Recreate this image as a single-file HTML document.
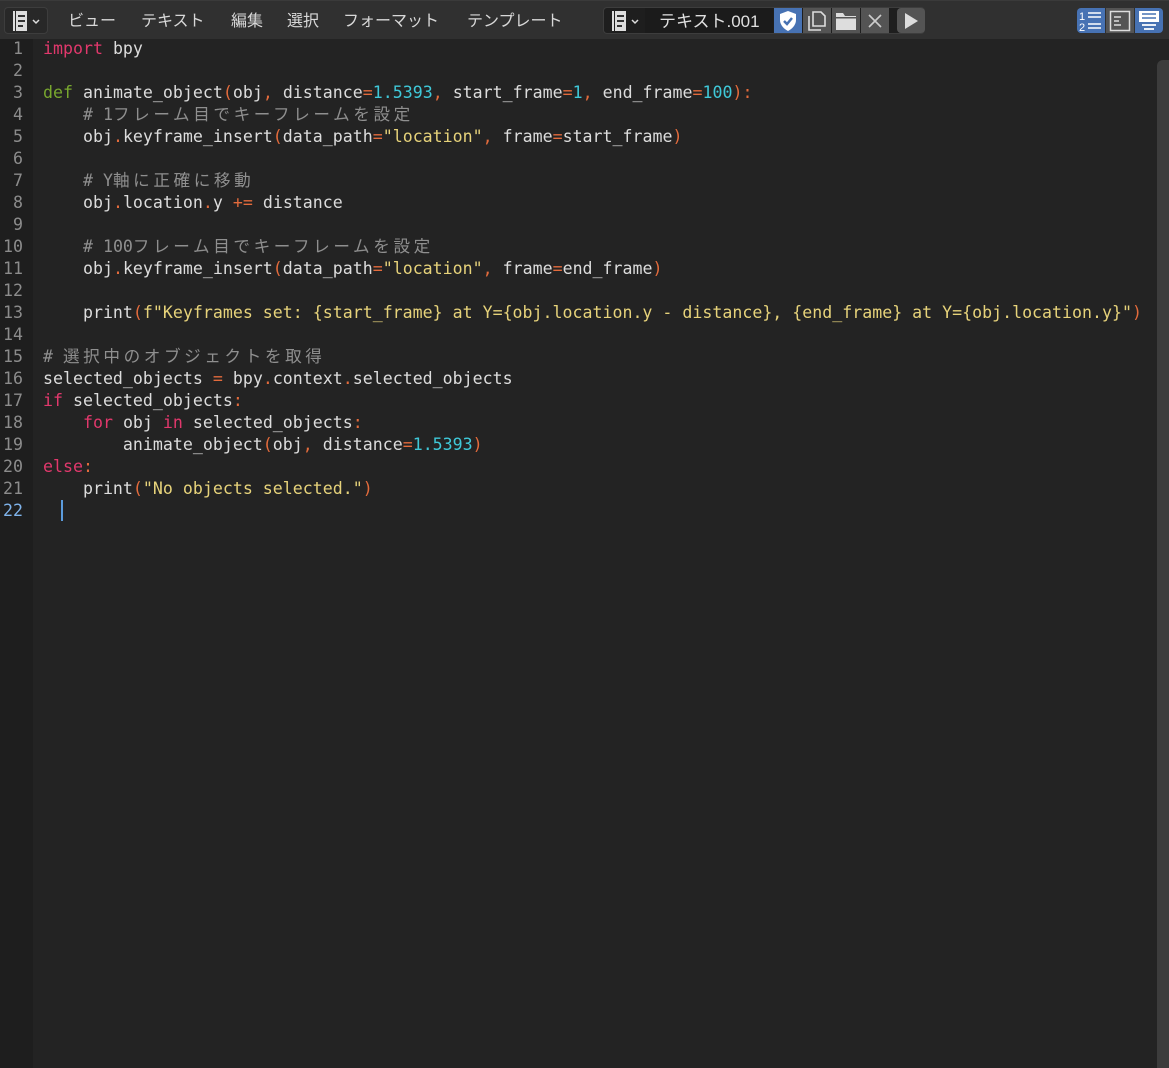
<!DOCTYPE html>
<html><head><meta charset="utf-8"><style>
body{margin:0;width:1169px;height:1068px;background:#232323;overflow:hidden;position:relative;font-family:"DejaVu Sans Mono","Noto Sans CJK JP",monospace}
#hdr{position:absolute;left:0;top:0;width:1169px;height:39px;background:#303030;border-top:1px solid #3a3a3a;box-sizing:border-box}
.menu{position:absolute;top:6px;font-family:"Liberation Sans","Noto Sans CJK JP",sans-serif;font-size:16px;color:#d8d8d8}
.btn{position:absolute;top:6px;height:27px;background:#282828;border-radius:4px}
#gut{position:absolute;left:0;top:39px;width:33px;height:1029px;background:#1e1e1e}
#code{position:absolute;left:0;top:38px;font-size:16.6px;color:#dcdcdc;white-space:pre}
#code div{height:22px;line-height:22px;overflow:visible}
.ln{display:inline-block;width:23px;text-align:right;color:#8c8c8c;margin-right:20px}
.k{color:#e1386c}.d{color:#78a72e}.n{color:#3fc8d8}.s{color:#e6d27a}.o{color:#e36b3c}.c{color:#8f8f8f}
.j{letter-spacing:3.6px;font-family:"Noto Sans CJK JP",sans-serif;line-height:1}
</style></head><body>
<div id="hdr">
 <div class="btn" style="left:4px;width:44px;background:#282828;border:1px solid #3d3d3d;box-sizing:border-box"></div>
 <svg style="position:absolute;left:11px;top:10px" width="34" height="20"><rect x="2" y="0" width="2" height="20" fill="#ddd"/><rect x="5" y="0" width="11" height="20" fill="#ddd"/><rect x="7" y="4" width="7" height="2" fill="#333"/><rect x="7" y="9" width="7" height="2" fill="#333"/><rect x="7" y="14" width="5" height="2" fill="#333"/><path d="M22 9l3 3 3-3" stroke="#ddd" fill="none" stroke-width="1.5"/></svg>
 <span class="menu" style="left:68px">ビュー</span>
 <span class="menu" style="left:141px">テキスト</span>
 <span class="menu" style="left:231px">編集</span>
 <span class="menu" style="left:287px">選択</span>
 <span class="menu" style="left:343px">フォーマット</span>
 <span class="menu" style="left:467px">テンプレート</span>
 <div class="btn" style="left:603px;width:322px;background:#1e1e1e;border:1px solid #3d3d3d;box-sizing:border-box"></div>
 <svg style="position:absolute;left:610px;top:10px" width="34" height="20"><rect x="2" y="0" width="2" height="20" fill="#ddd"/><rect x="5" y="0" width="11" height="20" fill="#ddd"/><rect x="7" y="4" width="7" height="2" fill="#333"/><rect x="7" y="9" width="7" height="2" fill="#333"/><rect x="7" y="14" width="5" height="2" fill="#333"/><path d="M22 9l3 3 3-3" stroke="#ddd" fill="none" stroke-width="1.5"/></svg>
 <div style="position:absolute;left:645px;top:7px;width:128px;height:25px;background:#1b1b1b"></div>
 <span class="menu" style="left:659px;color:#e0e0e0;font-size:17px">テキスト.001</span>
 <div style="position:absolute;left:774px;top:7px;width:28px;height:25px;background:#4772b3"></div>
 <svg style="position:absolute;left:778px;top:9px" width="20" height="22"><path d="M10 1L2 4v6c0 5 4 9 8 11 4-2 8-6 8-11V4z" fill="#fff"/><path d="M6 11l3 3 5-6" stroke="#4772b3" stroke-width="2.5" fill="none"/></svg>
 <div style="position:absolute;left:803px;top:7px;width:28px;height:25px;background:#545454"></div>
 <svg style="position:absolute;left:806px;top:9px" width="22" height="22"><path d="M3 6v14h12M7 2h8l4 4v10H7z" stroke="#ddd" stroke-width="1.6" fill="none"/></svg>
 <div style="position:absolute;left:832px;top:7px;width:28px;height:25px;background:#545454"></div>
 <svg style="position:absolute;left:835px;top:10px" width="22" height="20"><path d="M1 2h7l2 3h11v14H1z" fill="#ddd"/><rect x="1" y="6" width="20" height="1.5" fill="#545454"/></svg>
 <div style="position:absolute;left:861px;top:7px;width:28px;height:25px;background:#545454"></div>
 <svg style="position:absolute;left:868px;top:13px" width="14" height="14"><path d="M1 1l12 12M13 1L1 13" stroke="#ccc" stroke-width="1.6"/></svg>
 <div style="position:absolute;left:897px;top:7px;width:28px;height:25px;background:#545454;border-radius:4px"></div>
 <svg style="position:absolute;left:903px;top:11px" width="16" height="18"><path d="M2 1l13 8L2 17z" fill="#ddd"/></svg>
 <div style="position:absolute;left:1077px;top:7px;width:28px;height:25px;background:#4772b3;border-radius:4px 0 0 4px"></div>
 <svg style="position:absolute;left:1079px;top:9px" width="24" height="22"><text x="0" y="10" font-size="11" fill="#fff" font-family="Liberation Sans">1</text><text x="0" y="21" font-size="11" fill="#fff" font-family="Liberation Sans">2</text><path d="M9 3h13M9 7h13M9 14h13M9 18h13" stroke="#fff" stroke-width="1.6"/></svg>
 <div style="position:absolute;left:1106px;top:7px;width:28px;height:25px;background:#545454"></div>
 <svg style="position:absolute;left:1109px;top:9px" width="22" height="22"><rect x="1.5" y="1.5" width="19" height="19" stroke="#ddd" stroke-width="1.5" fill="none"/><path d="M5 7h7M5 11h5M5 15h7" stroke="#ddd" stroke-width="1.5"/></svg>
 <div style="position:absolute;left:1135px;top:7px;width:28px;height:25px;background:#4772b3;border-radius:0 4px 4px 0"></div>
 <svg style="position:absolute;left:1138px;top:9px" width="22" height="22"><rect x="1" y="1" width="20" height="11" fill="#fff"/><path d="M4 4h14M4 8h14" stroke="#4772b3" stroke-width="1.5"/><path d="M4 15h14M6 19h10" stroke="#fff" stroke-width="1.8"/></svg>
</div>
<div id="gut"></div>
<div style="position:absolute;left:1157px;top:60px;width:12px;height:1008px;background:#3c3c3c;border-radius:6px 0 0 0"></div>
<div id="code"><div><span class="ln">1</span><span class="k">import</span> bpy</div><div><span class="ln">2</span></div><div><span class="ln">3</span><span class="d">def</span> animate_object<span class="o">(</span>obj<span class="o">,</span> distance<span class="o">=</span><span class="n">1.5393</span><span class="o">,</span> start_frame<span class="o">=</span><span class="n">1</span><span class="o">,</span> end_frame<span class="o">=</span><span class="n">100</span><span class="o">):</span></div><div><span class="ln">4</span>    <span class="c"># 1<span class="j">フレーム目でキーフレームを設定</span></span></div><div><span class="ln">5</span>    obj<span class="o">.</span>keyframe_insert<span class="o">(</span>data_path<span class="o">=</span><span class="s">"location"</span><span class="o">,</span> frame<span class="o">=</span>start_frame<span class="o">)</span></div><div><span class="ln">6</span></div><div><span class="ln">7</span>    <span class="c"># Y<span class="j">軸に正確に移動</span></span></div><div><span class="ln">8</span>    obj<span class="o">.</span>location<span class="o">.</span>y <span class="o">+=</span> distance</div><div><span class="ln">9</span></div><div><span class="ln">10</span>    <span class="c"># 100<span class="j">フレーム目でキーフレームを設定</span></span></div><div><span class="ln">11</span>    obj<span class="o">.</span>keyframe_insert<span class="o">(</span>data_path<span class="o">=</span><span class="s">"location"</span><span class="o">,</span> frame<span class="o">=</span>end_frame<span class="o">)</span></div><div><span class="ln">12</span></div><div><span class="ln">13</span>    print<span class="o">(</span><span class="s">f"Keyframes set: {start_frame} at Y={obj.location.y - distance}, {end_frame} at Y={obj.location.y}"</span><span class="o">)</span></div><div><span class="ln">14</span></div><div><span class="ln">15</span><span class="c"># <span class="j">選択中のオブジェクトを取得</span></span></div><div><span class="ln">16</span>selected_objects <span class="o">=</span> bpy<span class="o">.</span>context<span class="o">.</span>selected_objects</div><div><span class="ln">17</span><span class="k">if</span> selected_objects<span class="o">:</span></div><div><span class="ln">18</span>    <span class="k">for</span> obj <span class="k">in</span> selected_objects<span class="o">:</span></div><div><span class="ln">19</span>        animate_object<span class="o">(</span>obj<span class="o">,</span> distance<span class="o">=</span><span class="n">1.5393</span><span class="o">)</span></div><div><span class="ln">20</span><span class="k">else</span><span class="o">:</span></div><div><span class="ln">21</span>    print<span class="o">(</span><span class="s">"No objects selected."</span><span class="o">)</span></div><div><span class="ln" style="color:#7fb3ea">22</span></div></div>
<div style="position:absolute;left:61px;top:500px;width:2px;height:21px;background:#5b9bdc"></div>
</body></html>
